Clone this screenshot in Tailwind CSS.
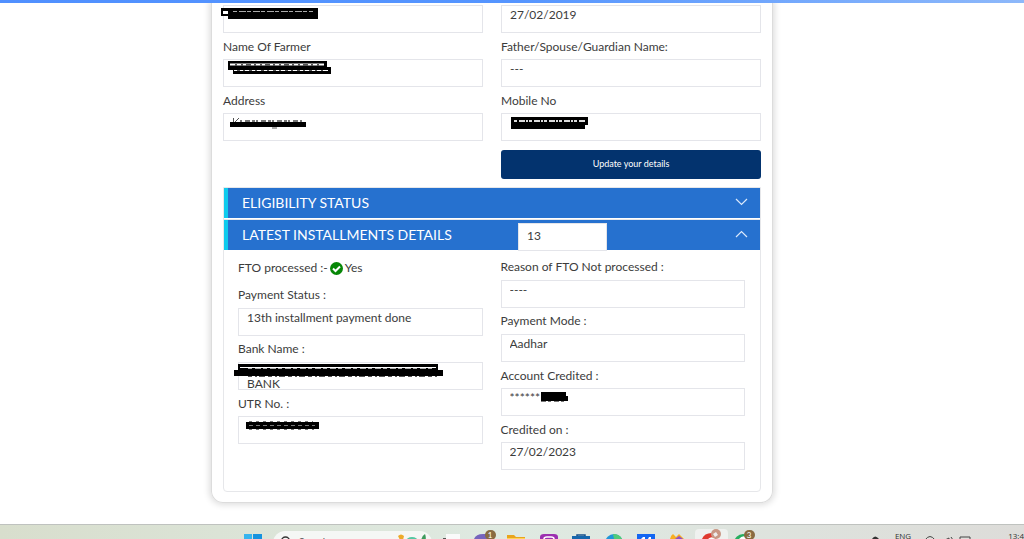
<!DOCTYPE html>
<html lang="en">
<head>
<meta charset="utf-8">
<title>Beneficiary Status</title>
<script src="https://cdn.jsdelivr.net/npm/@tailwindcss/browser@4"></script>
</head>
<body class="flex h-screen flex-col overflow-hidden bg-white font-['Lato',sans-serif] text-[12px] text-[#3c3c3c]">
<div class="h-[3px] shrink-0 bg-linear-to-r from-[#5090ff] via-[#5595ff] to-[#8db8fa]"></div>

<main class="min-h-0 flex-1 overflow-hidden pr-[251px] pl-[211px]">
  <section class="rounded-b-xl border-x border-b border-[#dcdcdc] px-[11px] pt-[2px] pb-[10px] shadow-[0_0_6px_2px_rgba(0,0,0,0.13)]">
    <form>
      <div class="grid grid-cols-2 gap-x-[18px]">
        <div class="relative">
          <input aria-label="Registration No" readonly class="block h-7 w-full border border-[#e4e5ea] px-2 pb-[10px]">
          <svg class="absolute -left-[2px] top-[2px]" width="98" height="14" aria-hidden="true"><path d="M0 1h97v11H7V9H0z"/><path d="M2 4h5v3H2z" fill="#fff"/><path d="M12 4.500h80" stroke="#aaa" stroke-dasharray="4 2 7 1"/></svg>
        </div>
        <div><input aria-label="Registration Date" readonly value="27/02/2019" class="block h-7 w-full border border-[#e4e5ea] px-2 pb-[10px]"></div>
        <div>
          <label for="farmer" class="block h-[26px] leading-7">Name Of Farmer</label>
          <div class="relative">
            <input id="farmer" readonly class="block h-7 w-full border border-[#e4e5ea] px-2 pb-[10px]">
            <svg class="absolute left-[4px] top-[1px]" width="104" height="16" aria-hidden="true"><path d="M1 1h99v6h4v7H6V10H1z"/><path d="M3 4.500h94" stroke="#fff" stroke-width="2"/><path d="M7 10.500h94" stroke="#fff"/><path d="M8 5h86" stroke="#555" stroke-width="2" stroke-dasharray="2 4 2 3 5 3"/><path d="M10 10.500h86" stroke="#555" stroke-dasharray="3 3 2 4"/></svg>
          </div>
        </div>
        <div>
          <label for="guardian" class="block h-[26px] leading-7">Father/Spouse/Guardian Name:</label>
          <input id="guardian" readonly value="---" class="block h-7 w-full border border-[#e4e5ea] px-2 pb-[10px]">
        </div>
        <div>
          <label for="address" class="block h-[26px] leading-7">Address</label>
          <div class="relative">
            <input id="address" readonly class="block h-7 w-full border border-[#e4e5ea] px-2 pb-[10px]">
            <svg class="absolute left-[7px] top-[4px]" width="77" height="13" aria-hidden="true"><path d="M0 5h76v5H0z"/><path d="M10 4h62" stroke="#777" stroke-width="2" stroke-dasharray="2 3 5 2 3 1"/><path d="M3.500 1v4M9 1 5 5M42 11h5" stroke="#555"/></svg>
          </div>
        </div>
        <div>
          <label for="mobile" class="block h-[26px] leading-7">Mobile No</label>
          <div class="relative">
            <input id="mobile" readonly class="block h-7 w-full border border-[#e4e5ea] px-2 pb-[10px]">
            <svg class="absolute left-[10px] top-[4px]" width="78" height="13" aria-hidden="true"><path d="M0 0h77v8h-3v4H0z"/><path d="M3 4h72" stroke="#ddd" stroke-width="2" stroke-dasharray="3 2 6 1 2 1"/></svg>
          </div>
        </div>
        <button type="button" class="col-start-2 mt-[9px] h-[29px] rounded-[3px] bg-[#03336e] pb-[2px] text-[9px] text-white">Update your details</button>
      </div>

      <div class="mt-2 rounded-b-[4px] border border-[#e6e7ea]">
        <button type="button" aria-expanded="false" class="flex h-[30px] w-full items-center border-l-4 border-[#0fcbed] bg-[#2671cf] pr-3 pb-[2px] pl-[14px] text-[14px] text-white">
          <span class="flex-1 text-left">ELIGIBILITY STATUS</span>
          <svg width="13" height="8" fill="none" stroke="#dbe9fb" stroke-width="1.200" aria-hidden="true"><path d="M1 1l5.500 5.500L12 1"/></svg>
        </button>
        <div class="mt-px border-t border-[#e6e7ea]"></div>
        <div class="flex h-[30px] items-center border-l-4 border-[#0fcbed] bg-[#2671cf] pr-3 pb-[2px] pl-[14px] text-[14px] text-white">
          <h2 class="w-[276px]">LATEST INSTALLMENTS DETAILS</h2>
          <input aria-label="Installment number" value="13" class="mt-[5px] h-7 w-[89px] border border-[#e4e5ea] bg-white px-2 pb-[2px] text-[12px] text-[#3c3c3c]">
          <button type="button" aria-label="Collapse" aria-expanded="true" class="ml-auto"><svg width="13" height="8" fill="none" stroke="#dbe9fb" stroke-width="1.200" aria-hidden="true"><path d="M1 7l5.500-5.500L12 7"/></svg></button>
        </div>
        <div class="grid grid-cols-2 gap-x-[18px] pt-1 pr-[15px] pb-[21px] pl-[14px]">
          <div>
            <p class="flex h-7 items-center">FTO processed :-
              <svg class="mx-[2px]" width="13" height="13" viewBox="0 0 13 13" aria-hidden="true"><circle cx="6.500" cy="6.500" r="6.500" fill="#078707"/><path d="M3 6.500l2.500 2.500 4.500-4.500" fill="none" stroke="#fff" stroke-width="2"/></svg>Yes</p>
            <label for="status" class="block h-[26px] leading-[26px]">Payment Status :</label>
            <input id="status" readonly value="13th installment payment done" class="block h-7 w-full border border-[#e4e5ea] px-2 pb-[10px]">
            <label for="bank" class="block h-[26px] leading-[26px]">Bank Name :</label>
            <div class="relative">
              <textarea id="bank" readonly class="block h-7 w-full resize-none overflow-hidden border border-[#e4e5ea] px-2 leading-[14px]">

BANK</textarea>
              <svg class="absolute -left-[4px] top-[2px]" width="210" height="14" aria-hidden="true"><path d="M4 0h200v6h5v6H0V6h4z"/><path d="M6 3.500h196" stroke="#fff"/><path d="M14 4.500h184" stroke="#aaa" stroke-dasharray="4 3 6 2"/><path d="M14 12.500h190" stroke="#555" stroke-dasharray="4 3 2 2 6 3"/></svg>
            </div>
            <label for="utr" class="block h-[26px] leading-7">UTR No. :</label>
            <div class="relative">
              <input id="utr" readonly class="block h-7 w-full border border-[#e4e5ea] px-2 pb-[10px]">
              <svg class="absolute left-[8px] top-[5px]" width="74" height="10" aria-hidden="true"><path d="M0 1h73v7H0z"/><path d="M3 4.500h66" stroke="#777" stroke-dasharray="4 3"/><path d="M3 .5h64M3 8.500h65" stroke="#777" stroke-dasharray="3 4"/></svg>
            </div>
          </div>
          <div>
            <label for="reason" class="block h-[26px] leading-[26px]">Reason of FTO Not processed :</label>
            <input id="reason" readonly value="----" class="block h-7 w-full border border-[#e4e5ea] px-2 pb-[10px]">
            <label for="mode" class="block h-[26px] leading-[26px]">Payment Mode :</label>
            <input id="mode" readonly value="Aadhar" class="block h-7 w-full border border-[#e4e5ea] px-2 pb-[10px]">
            <label for="account" class="block h-[26px] leading-7">Account Credited :</label>
            <div class="relative">
              <input id="account" readonly value="******" class="block h-7 w-full border border-[#e4e5ea] px-2 pb-[10px]">
              <svg class="absolute left-[40px] top-[4px]" width="28" height="11" aria-hidden="true"><path d="M0 0h25v4h2v5H0z"/><path d="M0 9.500h24" stroke="#777" stroke-dasharray="5 2 3 3"/></svg>
            </div>
            <label for="credited" class="block h-[26px] leading-7">Credited on :</label>
            <input id="credited" readonly value="27/02/2023" class="block h-7 w-full border border-[#e4e5ea] px-2 pb-[10px]">
          </div>
        </div>
      </div>
    </form>
  </section>
</main>

<footer class="flex h-[15px] shrink-0 items-start overflow-hidden border-t border-[#bfc2bf] bg-linear-to-r from-[#d8decd] via-[#dfeae2] to-[#dddcd9] pl-[244px] text-[8px] text-[#333]">
  <button aria-label="Start" class="mt-[9px]"><svg width="18" height="18"><path d="M0 0h8v8H0zM9 0h9v8H9zM0 9h8v9H0zM9 9h9v9H9z" fill="#1693df"/><path d="M0 0h8v8H0z" fill="#36b4ee"/></svg></button>
  <div class="relative mt-[6px] ml-[11px] h-6 w-[159px] shrink-0 rounded-full bg-[#f5f7f5]">
    <input type="search" aria-label="Search" placeholder="Search" class="h-5 w-full pl-[26px] text-[10px] placeholder:text-[#555]">
    <svg class="absolute top-[5px] left-[7px]" width="12" height="12" fill="none" stroke="#333" stroke-width="1.500" aria-hidden="true"><circle cx="5.500" cy="5" r="4"/></svg>
    <svg class="absolute top-[3px] left-[122px]" width="32" height="12" aria-hidden="true"><path d="M3 2q3-3 6 0l-1 4H5z" fill="#edaa2b"/><path d="M4 6h4v6H4z" fill="#d98c16"/><ellipse cx="17" cy="7" rx="6" ry="4" fill="#55c7a2"/><path d="M26 9q0-7 4-9 2 5-1 10z" fill="#3e9b5d"/></svg>
  </div>
  <nav aria-label="Taskbar" class="ml-[3px] flex w-[325px] shrink-0">
    <button aria-label="Task view" class="flex h-[14px] flex-1 justify-center"><svg width="20" height="14"><path d="M2 13h11v2H2z" fill="#555"/><path d="M5 9h14v6H5z" fill="#fafafa"/></svg></button>
    <button aria-label="Chat" class="relative flex h-[14px] flex-1 justify-center"><svg width="20" height="14"><path d="M0 14q2-5 9-5h6v5z" fill="#7664bd"/></svg><span class="absolute top-[5px] left-[17px] h-[10px] w-[11px] rounded-full bg-[#896b40] text-center leading-[10px] text-white">1</span></button>
    <button aria-label="File Explorer" class="flex h-[14px] flex-1 justify-center"><svg width="18" height="14"><path d="M0 10h7l2 2h9v2H0z" fill="#e9a51d"/><path d="M0 13h18v1H0z" fill="#ffd45a"/></svg></button>
    <button aria-label="Instagram" class="flex h-[14px] flex-1 justify-center"><svg width="18" height="14"><path d="M0 14V12q0-3 4-3h10q4 0 4 3v2z" fill="#9c2fb0"/><path d="M4 14q0-2 3-2h4q3 0 3 2" fill="none" stroke="#fff" stroke-width="1.500"/></svg></button>
    <button aria-label="Briefcase" class="flex h-[14px] flex-1 justify-center"><svg width="18" height="14"><path d="M5 12V10h8v2" fill="none" stroke="#16508c" stroke-width="1.500"/><path d="M0 11h18v3H0z" fill="#1667ad"/></svg></button>
    <button aria-label="Edge" class="flex h-[14px] flex-1 justify-center"><svg width="18" height="14"><circle cx="9" cy="18" r="9" fill="#2196d8"/><path d="M8 9q7 0 9 5H9z" fill="#52cb78"/></svg></button>
    <button aria-label="Blue app" class="flex h-[14px] flex-1 justify-center"><svg width="18" height="14"><path d="M0 9h18v5H0z" fill="#1466f2"/><path d="M4 14l2-2h2v2m3 0 1-2h2v2" fill="#fff"/></svg></button>
    <button aria-label="Browser" class="flex h-[14px] flex-1 justify-center"><svg width="18" height="14"><path d="M0 14q1-4 3-5l3 3 3-3 3 3 2 2z" fill="#f7ae22"/><path d="M5 14l4-3 4 3z" fill="#9151c4"/></svg></button>
    <button aria-label="Chrome" class="mt-[4px] flex h-[14px] flex-1 justify-center rounded-t bg-[#eff1ef]"><svg width="22" height="11"><path d="M2 10q2-6 10-6l4 6z" fill="#df3930"/><path d="M8 10q3-3 7-1v1z" fill="#fff"/><circle cx="16" cy="5" r="5" fill="#c99784"/><path d="M13 5l3-2 2 3-3 2z" fill="#eee"/></svg></button>
    <button aria-label="WhatsApp" class="relative flex h-[14px] flex-1 justify-center"><svg width="20" height="14"><circle cx="9" cy="18" r="9" fill="#27ae60"/><path d="M5 14q3-4 8-2v2" fill="#fff"/></svg><span class="absolute top-[5px] left-[16px] h-[10px] w-[11px] rounded-full bg-[#896b40] text-center leading-[10px] text-white">3</span></button>
  </nav>
  <div class="ml-auto flex shrink-0 items-start font-['Open_Sans',sans-serif]">
    <svg class="mt-[11px] mr-[16px]" width="7" height="3"><path d="M0 3q3-5 7 0" fill="#333"/></svg>
    <span class="mt-[6px] mr-[14px] leading-[10px]">ENG</span>
    <svg class="mt-[11px] mr-[37px]" width="46" height="4" fill="none" stroke="#444"><path d="M0 4q5-7 10 0M20 4l4-2v2M26 1l2 3M35 1h10v3H35z"/></svg>
    <span class="mt-[6px] leading-[10px]">13:4</span>
  </div>
</footer>
</body>
</html>
